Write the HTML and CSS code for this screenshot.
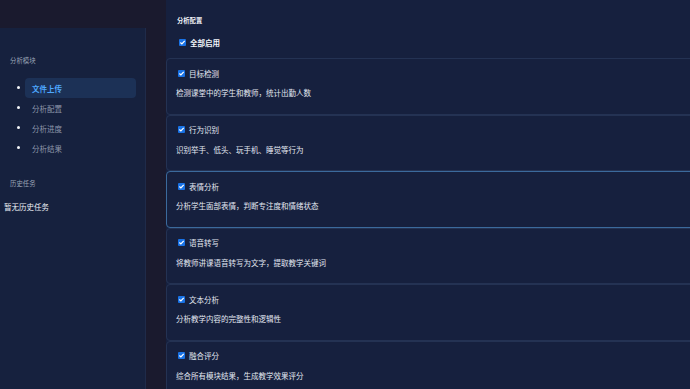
FILE: index.html
```html
<!DOCTYPE html>
<html lang="zh">
<head>
<meta charset="utf-8">
<link rel="stylesheet" href="styles.css">
</head>
<body>
<div class="layout">
  <aside class="sidebar">
    <div class="side-title">分析模块</div>
    <ul class="nav">
      <li class="nav-item active"><span class="dot"></span><span class="nav-label">文件上传</span></li>
      <li class="nav-item"><span class="dot"></span><span class="nav-label">分析配置</span></li>
      <li class="nav-item"><span class="dot"></span><span class="nav-label">分析进度</span></li>
      <li class="nav-item"><span class="dot"></span><span class="nav-label">分析结果</span></li>
    </ul>
    <div class="side-title history-title">历史任务</div>
    <div class="history-empty">暂无历史任务</div>
  </aside>
  <main class="main">
    <div class="main-title">分析配置</div>
    <div class="all-row"><svg class="cb" width="7" height="7" viewBox="0 0 7 7"><rect x="0" y="0" width="7" height="7" rx="1" fill="#1872e6"/><path d="M1.4 3.5 L2.9 5 L5.7 1.9" fill="none" stroke="#ffffff" stroke-width="1.2"/></svg><span class="all-label">全部启用</span></div>
    <div class="cards">
      <div class="card">
        <div class="card-head"><svg class="cb" width="7" height="7" viewBox="0 0 7 7"><rect x="0" y="0" width="7" height="7" rx="1" fill="#1872e6"/><path d="M1.4 3.5 L2.9 5 L5.7 1.9" fill="none" stroke="#ffffff" stroke-width="1.2"/></svg><span class="card-title">目标检测</span></div>
        <div class="card-desc">检测课堂中的学生和教师，统计出勤人数</div>
      </div>
      <div class="card">
        <div class="card-head"><svg class="cb" width="7" height="7" viewBox="0 0 7 7"><rect x="0" y="0" width="7" height="7" rx="1" fill="#1872e6"/><path d="M1.4 3.5 L2.9 5 L5.7 1.9" fill="none" stroke="#ffffff" stroke-width="1.2"/></svg><span class="card-title">行为识别</span></div>
        <div class="card-desc">识别举手、低头、玩手机、睡觉等行为</div>
      </div>
      <div class="card focused">
        <div class="card-head"><svg class="cb" width="7" height="7" viewBox="0 0 7 7"><rect x="0" y="0" width="7" height="7" rx="1" fill="#1872e6"/><path d="M1.4 3.5 L2.9 5 L5.7 1.9" fill="none" stroke="#ffffff" stroke-width="1.2"/></svg><span class="card-title">表情分析</span></div>
        <div class="card-desc">分析学生面部表情，判断专注度和情绪状态</div>
      </div>
      <div class="card">
        <div class="card-head"><svg class="cb" width="7" height="7" viewBox="0 0 7 7"><rect x="0" y="0" width="7" height="7" rx="1" fill="#1872e6"/><path d="M1.4 3.5 L2.9 5 L5.7 1.9" fill="none" stroke="#ffffff" stroke-width="1.2"/></svg><span class="card-title">语音转写</span></div>
        <div class="card-desc">将教师讲课语音转写为文字，提取教学关键词</div>
      </div>
      <div class="card">
        <div class="card-head"><svg class="cb" width="7" height="7" viewBox="0 0 7 7"><rect x="0" y="0" width="7" height="7" rx="1" fill="#1872e6"/><path d="M1.4 3.5 L2.9 5 L5.7 1.9" fill="none" stroke="#ffffff" stroke-width="1.2"/></svg><span class="card-title">文本分析</span></div>
        <div class="card-desc">分析教学内容的完整性和逻辑性</div>
      </div>
      <div class="card">
        <div class="card-head"><svg class="cb" width="7" height="7" viewBox="0 0 7 7"><rect x="0" y="0" width="7" height="7" rx="1" fill="#1872e6"/><path d="M1.4 3.5 L2.9 5 L5.7 1.9" fill="none" stroke="#ffffff" stroke-width="1.2"/></svg><span class="card-title">融合评分</span></div>
        <div class="card-desc">综合所有模块结果，生成教学效果评分</div>
      </div>
    </div>
  </main>
</div>
</body>
</html>
```

FILE: styles.css
```css
* { box-sizing: border-box; }
html, body {
  margin: 0;
  padding: 0;
  width: 690px;
  height: 389px;
  overflow: hidden;
  background: #1a1a2e;
  font-family: "Noto Sans CJK SC", "Noto Sans", sans-serif;
  color: #e3e8f2;
}
.layout {
  display: flex;
  align-items: flex-start;
  height: 389px;
}
.sidebar {
  flex: 0 0 146px;
  margin-top: 28px;
  height: 361px;
  background: #16213e;
  border-right: 1px solid #1f2b4a;
  padding-top: 28px;
}
.side-title {
  font-size: 6.4px;
  line-height: 10px;
  color: #9aa3b6;
  padding-left: 10px;
}
.nav {
  list-style: none;
  margin: 12px 0 0 0;
  padding: 0;
}
.nav-item {
  position: relative;
  height: 20px;
  margin-left: 25px;
  width: 111px;
  padding-left: 7px;
  display: flex;
  align-items: center;
  font-size: 7.5px;
  color: #8d96aa;
  border-radius: 4px;
}
.nav-item.active {
  background: #1c3156;
  color: #4ea8ff;
  font-weight: 700;
}
.dot {
  position: absolute;
  left: -8px;
  top: 8px;
  width: 3px;
  height: 3px;
  border-radius: 50%;
  background: #f2f4f8;
}
.history-title {
  margin-top: 21px;
}
.history-empty {
  margin-top: 13px;
  padding-left: 4px;
  font-size: 7.5px;
  line-height: 10px;
  color: #eef1f6;
}
.main {
  flex: 1 1 auto;
  min-width: 0;
  margin-left: 20px;
  height: 389px;
  background: #16203e;
  padding-top: 16px;
  overflow: hidden;
}
.main-title {
  padding-left: 11px;
  font-size: 6.3px;
  line-height: 10px;
  font-weight: 700;
  color: #f1f4f9;
}
.all-row {
  display: flex;
  align-items: center;
  height: 12px;
  margin-top: 10px;
  padding-left: 13px;
}
.all-label {
  margin-left: 4px;
  font-size: 7.5px;
  font-weight: 700;
  color: #f1f4f9;
}
.cb {
  flex: 0 0 7px;
  display: block;
}
.cards {
  margin-top: 10px;
  margin-right: -12px;
}
.card {
  height: 56.6px;
  border: 1px solid #243253;
  border-radius: 4px;
  padding: 9px 0 0 9px;
}
.card.focused {
  border-color: #3b6a9c;
}
.card-head {
  display: flex;
  align-items: center;
  height: 10px;
  padding-left: 2px;
}
.card-title {
  margin-left: 4px;
  font-size: 7.5px;
  color: #e3e8f2;
}
.card-desc {
  margin-top: 10px;
  font-size: 7.5px;
  line-height: 10px;
  color: #e3e8f2;
}
```
